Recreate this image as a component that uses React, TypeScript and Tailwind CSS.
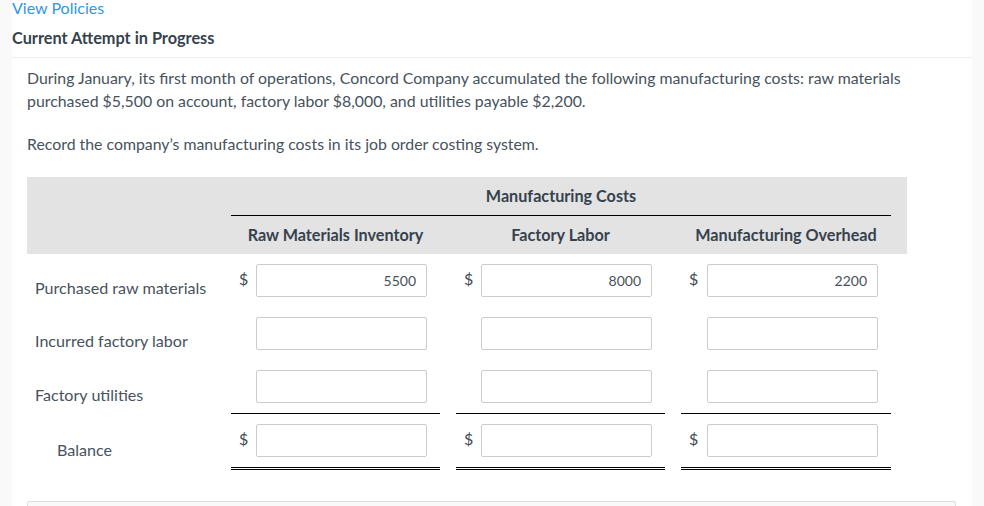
const lato = "font-['Lato','Noto_Sans',sans-serif]";

function MoneyCell({ value, dollar, line, wide }: { value?: string; dollar?: boolean; line?: 'single' | 'double'; wide?: boolean }) {
  return (
    <div className={wide ? 'w-[210px]' : 'w-[209px]'}>
      <div className="flex h-[33px]">
        <div className={`pt-[5px] pl-[8px] text-[16px] leading-[20px] text-[#3d4a55] ${wide ? 'w-[26px]' : 'w-[25px]'}`}>{dollar ? '$' : ''}</div>
        <input
          readOnly
          value={value ?? ''}
          className="w-[171px] h-[33px] border border-[#cccccc] rounded-[2px] bg-white text-right px-[10px] text-[14px] text-[#47525c] outline-none"
        />
      </div>
      {line === 'single' && <div className="mt-[10px] h-[1px] bg-black" />}
      {line === 'double' && <div className="mt-[10px] h-[3px] border-y border-black" />}
    </div>
  );
}

function Row({
  label,
  values,
  dollar,
  line,
  labelClass,
  className,
}: {
  label: string;
  values?: string[];
  dollar?: boolean;
  line?: 'single' | 'double';
  labelClass: string;
  className?: string;
}) {
  return (
    <div className={`flex ${className ?? ''}`}>
      <div className={`w-[204px] h-[33px] text-[16.1px] leading-[20px] text-[#47525c] ${labelClass}`}>{label}</div>
      <div className="flex gap-x-[16px]">
        <MoneyCell value={values?.[0]} dollar={dollar} line={line} />
        <MoneyCell value={values?.[1]} dollar={dollar} line={line} />
        <MoneyCell value={values?.[2]} dollar={dollar} line={line} wide />
      </div>
    </div>
  );
}

export default function App() {
  return (
    <div className={`flex h-[506px] overflow-hidden bg-white ${lato}`}>
      <div className="w-[12px] shrink-0 bg-[#f9f9f9]" />
      <div className="w-[960px] shrink-0">
        <div className="h-[15px] text-[16px] leading-[15px] text-[#2f96e8]">View Policies</div>
        <div className="h-[43px] border-b border-[#eeeeee] pt-[14px] text-[16.3px] leading-[18px] font-bold text-[#36424d]">
          Current Attempt in Progress
        </div>
        <div className="px-[15px] pt-[8px]">
          <p className="text-[15.85px] leading-[23px] text-[#47525c]">
            During January, its first month of operations, Concord Company accumulated the following manufacturing costs: raw materials
            <br />
            purchased $5,500 on account, factory labor $8,000, and utilities payable $2,200.
          </p>
          <p className="mt-[20px] text-[15.85px] leading-[23px] text-[#47525c]">
            Record the company’s manufacturing costs in its job order costing system.
          </p>

          <div className="mt-[22px] w-[880px] h-[77px] bg-[#e3e3e3] pl-[204px] text-[16.2px] font-bold text-[#36424d]">
            <div className="w-[660px] h-[39px] border-b-[1.5px] border-black pt-[9px] text-center leading-[20px]">Manufacturing Costs</div>
            <div className="flex gap-x-[16px] pt-[9px] leading-[20px]">
              <div className="w-[209px] text-center">Raw Materials Inventory</div>
              <div className="w-[209px] text-center">Factory Labor</div>
              <div className="w-[210px] text-center">Manufacturing Overhead</div>
            </div>
          </div>

          <Row className="mt-[10px]" labelClass="pl-[8px] pt-[14px]" label="Purchased raw materials" values={['5500', '8000', '2200']} dollar />
          <Row className="mt-[20px]" labelClass="pl-[8px] pt-[14px]" label="Incurred factory labor" />
          <Row className="mt-[20px]" labelClass="pl-[8px] pt-[15px]" label="Factory utilities" line="single" />
          <Row className="mt-[10px]" labelClass="pl-[30px] pt-[16px]" label="Balance" dollar line="double" />

          <div className="mt-[31px] w-[929px] h-[20px] border border-[#dddddd] rounded-[2px] bg-[#f9f9f9]" />
        </div>
      </div>
      <div className="flex-1 bg-[#f9f9f9]" />
    </div>
  );
}
